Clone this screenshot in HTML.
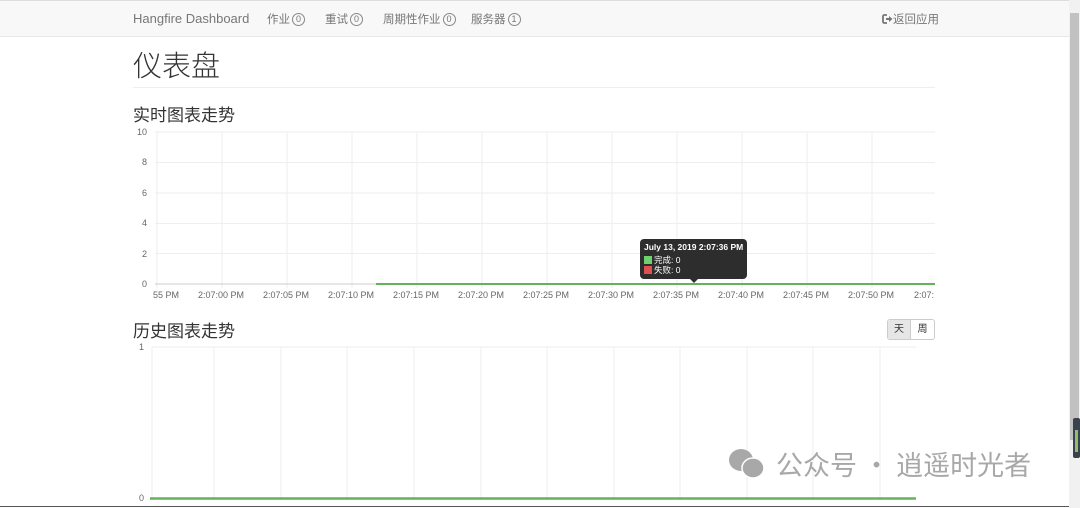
<!DOCTYPE html>
<html><head><meta charset="utf-8"><style>
*{margin:0;padding:0;box-sizing:border-box}
body{width:1080px;height:508px;overflow:hidden;background:#fff;font-family:"Liberation Sans","Noto Sans CJK SC",sans-serif;color:#333;position:relative}
.nav{position:absolute;left:0;top:0;width:1069px;height:37px;background:#f8f8f8;border-top:1px solid #ddd;border-bottom:1px solid #e7e7e7}
.nav span{position:absolute;top:10px;font-size:11.5px;color:#777}
.b{display:inline-block;border:1px solid #888;border-radius:7px;font-size:9px;padding:0 3px;line-height:11px;margin-left:2px;vertical-align:1px;font-style:normal}
.abs{position:absolute}
</style></head><body>
<div class="nav">
<span style="left:133px;font-size:13px;top:10px">Hangfire Dashboard</span>
<span style="left:267px">作业<i class="b">0</i></span>
<span style="left:325px">重试<i class="b">0</i></span>
<span style="left:383px">周期性作业<i class="b">0</i></span>
<span style="left:471px">服务器<i class="b">1</i></span>
<span style="left:882px"><svg width="11" height="10" viewBox="0 0 11 10" style="vertical-align:-1px"><path d="M5 1H2.5Q1 1 1 2.5V7.5Q1 9 2.5 9H5" fill="none" stroke="#777" stroke-width="1.8"/><path d="M4 4H7V2L10.5 5L7 8V6H4Z" fill="#777"/></svg>返回应用</span>
</div>
<div class="abs" style="left:133px;top:49px;font-size:29px;line-height:36px;font-weight:300">仪表盘</div>
<div class="abs" style="left:133px;top:87px;width:802px;border-top:1px solid #eee"></div>
<div class="abs" style="left:133px;top:101px;font-size:17px">实时图表走势</div>
<div class="abs" style="left:133px;top:317px;font-size:17px">历史图表走势</div>
<div class="abs" style="left:887px;top:319px;width:48px;height:21px;border:1px solid #ccc;border-radius:3px;font-size:10px;display:flex">
<div style="width:24px;background:#e6e6e6;text-align:center;line-height:19px;border-right:1px solid #ccc">天</div><div style="width:24px;text-align:center;line-height:19px">周</div></div>
<svg class="abs" style="left:0;top:0" width="1080" height="508" font-family="Liberation Sans" font-size="9" fill="#666">
<g stroke="#eee" stroke-width="1">
<line x1="155" y1="132" x2="935" y2="132"/><line x1="155" y1="162.5" x2="935" y2="162.5"/><line x1="155" y1="193" x2="935" y2="193"/><line x1="155" y1="223.5" x2="935" y2="223.5"/><line x1="155" y1="253.5" x2="935" y2="253.5"/>
<line x1="157" y1="132" x2="157" y2="288"/>
<line x1="222" y1="132" x2="222" y2="288"/><line x1="287" y1="132" x2="287" y2="288"/><line x1="352" y1="132" x2="352" y2="288"/><line x1="417" y1="132" x2="417" y2="288"/><line x1="482" y1="132" x2="482" y2="288"/><line x1="547" y1="132" x2="547" y2="288"/><line x1="612" y1="132" x2="612" y2="288"/><line x1="677" y1="132" x2="677" y2="288"/><line x1="742" y1="132" x2="742" y2="288"/><line x1="807" y1="132" x2="807" y2="288"/><line x1="872" y1="132" x2="872" y2="288"/>
<line x1="152" y1="347" x2="916" y2="347"/>
<line x1="152" y1="347" x2="152" y2="500"/><line x1="214" y1="347" x2="214" y2="500"/><line x1="281" y1="347" x2="281" y2="500"/><line x1="347" y1="347" x2="347" y2="500"/><line x1="414" y1="347" x2="414" y2="500"/><line x1="481" y1="347" x2="481" y2="500"/><line x1="547" y1="347" x2="547" y2="500"/><line x1="614" y1="347" x2="614" y2="500"/><line x1="680" y1="347" x2="680" y2="500"/><line x1="747" y1="347" x2="747" y2="500"/><line x1="813" y1="347" x2="813" y2="500"/><line x1="880" y1="347" x2="880" y2="500"/>
</g>
<line x1="155" y1="284" x2="935" y2="284" stroke="#ccc"/>
<g text-anchor="end"><text x="147" y="135">10</text><text x="147" y="165">8</text><text x="147" y="196">6</text><text x="147" y="226">4</text><text x="147" y="257">2</text><text x="147" y="287">0</text><text x="144" y="350">1</text><text x="144" y="501">0</text></g>
<g text-anchor="middle"><text x="166" y="298">55 PM</text><text x="221" y="298">2:07:00 PM</text><text x="286" y="298">2:07:05 PM</text><text x="351" y="298">2:07:10 PM</text><text x="416" y="298">2:07:15 PM</text><text x="481" y="298">2:07:20 PM</text><text x="546" y="298">2:07:25 PM</text><text x="611" y="298">2:07:30 PM</text><text x="676" y="298">2:07:35 PM</text><text x="741" y="298">2:07:40 PM</text><text x="806" y="298">2:07:45 PM</text><text x="871" y="298">2:07:50 PM</text><text x="924" y="298">2:07:</text></g>
<line x1="376" y1="284" x2="935" y2="284" stroke="#62b35a" stroke-width="2"/>
<line x1="150" y1="498.5" x2="916" y2="498.5" stroke="#62b35a" stroke-width="2.5"/>
<rect x="640" y="239" width="107" height="40" rx="4" fill="#2d2d2d"/>
<path d="M690 279 L694 283 L698 279Z" fill="#2d2d2d"/>
<text x="644" y="250" fill="#fff" font-weight="bold" font-size="8.5">July 13, 2019 2:07:36 PM</text>
<rect x="644" y="256" width="8" height="8" fill="#6fd06f"/><rect x="644" y="266" width="8" height="8" fill="#e05050"/>
<text x="654" y="263" fill="#fff" font-size="8.5" font-family="Liberation Sans,Noto Sans CJK SC">完成: 0</text>
<text x="654" y="273" fill="#fff" font-size="8.5" font-family="Liberation Sans,Noto Sans CJK SC">失败: 0</text>
<g fill="#a8a8a8"><ellipse cx="741" cy="460" rx="12" ry="11"/><ellipse cx="753" cy="468" rx="11" ry="10" stroke="#fff" stroke-width="1.5"/></g>
<text x="776" y="475" font-size="27" fill="#a8a8a8" font-family="Noto Sans CJK SC">公众号 · 逍遥时光者</text>
<rect x="1069" y="0" width="11" height="508" fill="#f1f1f1"/>
<rect x="1070" y="13" width="9" height="427" fill="#c1c1c1"/>
<rect x="1073" y="418" width="7" height="40" rx="2" fill="#3a4250"/>
<rect x="1075" y="430" width="3" height="22" fill="#8fbf6a"/>
<line x1="0" y1="506.5" x2="1069" y2="506.5" stroke="#555"/>
</svg>
</body></html>
